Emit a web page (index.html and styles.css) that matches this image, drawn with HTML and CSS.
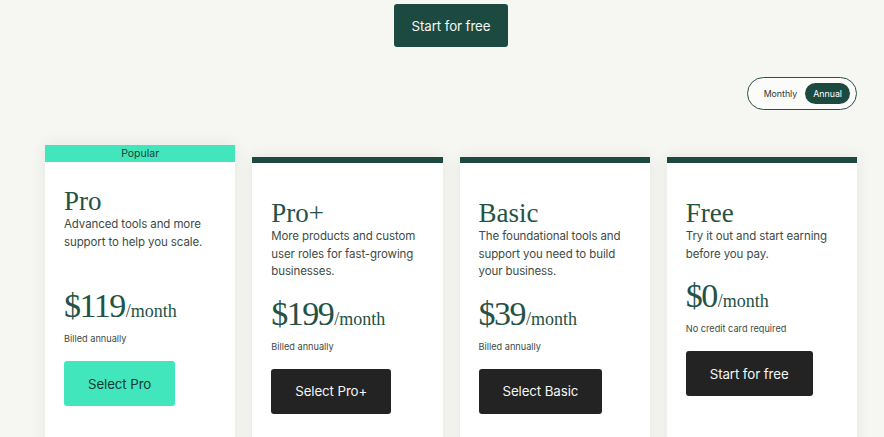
FILE: index.html
```html
<!DOCTYPE html>
<html lang="en">
<head>
<meta charset="utf-8">
<title>Pricing</title>
<link rel="stylesheet" href="styles.css">
</head>
<body>
<div class="page">
  <div class="hero">
    <a class="btn btn-green-dark" href="#">Start for free</a>
  </div>
  <div class="toggle-row">
    <div class="toggle">
      <span class="seg">Monthly</span>
      <span class="seg seg-active">Annual</span>
    </div>
  </div>
  <div class="cards">
    <div class="card card-popular">
      <div class="banner">Popular</div>
      <div class="card-body">
        <h2 class="title">Pro</h2>
        <p class="desc">Advanced tools and more support to help you scale.</p>
        <div class="price price-popular"><span class="amount">$119</span><span class="per">/month</span></div>
        <div class="note">Billed annually</div>
        <a class="btn btn-mint" href="#">Select Pro</a>
      </div>
    </div>
    <div class="card">
      <div class="bar"></div>
      <div class="card-body">
        <h2 class="title">Pro+</h2>
        <p class="desc">More products and custom user roles for fast-growing businesses.</p>
        <div class="price"><span class="amount">$199</span><span class="per">/month</span></div>
        <div class="note">Billed annually</div>
        <a class="btn btn-dark" href="#">Select Pro+</a>
      </div>
    </div>
    <div class="card">
      <div class="bar"></div>
      <div class="card-body">
        <h2 class="title">Basic</h2>
        <p class="desc">The foundational tools and support you need to build your business.</p>
        <div class="price"><span class="amount">$39</span><span class="per">/month</span></div>
        <div class="note">Billed annually</div>
        <a class="btn btn-dark" href="#">Select Basic</a>
      </div>
    </div>
    <div class="card">
      <div class="bar"></div>
      <div class="card-body">
        <h2 class="title">Free</h2>
        <p class="desc">Try it out and start earning before you pay.</p>
        <div class="price"><span class="amount">$0</span><span class="per">/month</span></div>
        <div class="note">No credit card required</div>
        <a class="btn btn-dark" href="#">Start for free</a>
      </div>
    </div>
  </div>
</div>
</body>
</html>
```

FILE: styles.css
```css
* { box-sizing: border-box; }
html, body {
  margin: 0;
  padding: 0;
  background: #f6f7f3;
  overflow: hidden;
}
body {
  font-family: Inter, "Noto Sans", "Liberation Sans", sans-serif;
  color: #3b4a45;
}
.page {
  width: 812px;
  margin-left: 45px;
}
.hero {
  display: flex;
  justify-content: center;
  padding-top: 4px;
}
.btn {
  display: inline-flex;
  align-items: center;
  justify-content: center;
  height: 45px;
  padding: 0 24px;
  border-radius: 3px;
  font-size: 13.3px;
  letter-spacing: -0.1px;
  text-decoration: none;
  white-space: nowrap;
}
.btn-green-dark {
  height: 43px;
  padding: 0 18px;
  background: #1d4a40;
  color: #f3f6f2;
}
.btn-mint {
  background: #41e6bc;
  color: #173a31;
}
.btn-dark {
  background: #222322;
  color: #f5f5f5;
}
.toggle-row {
  display: flex;
  justify-content: flex-end;
  margin-top: 30px;
}
.toggle {
  display: flex;
  align-items: center;
  height: 33px;
  padding: 0 6px 0 8px;
  border: 1px solid #2d4f47;
  border-radius: 17px;
  background: #fbfbf9;
}
.seg {
  display: inline-flex;
  align-items: center;
  height: 21px;
  padding: 0 8px;
  border-radius: 11px;
  font-size: 8.8px;
  color: #2a3430;
}
.seg-active {
  background: #1d4a40;
  color: #ffffff;
}
.cards {
  display: grid;
  grid-template-columns: repeat(4, 1fr);
  column-gap: 17px;
  align-items: start;
  margin-top: 35px;
}
.card {
  background: #ffffff;
  box-shadow: 0 0 14px rgba(40, 60, 50, 0.09);
  margin-top: 12px;
  min-height: 320px;
}
.card-popular {
  margin-top: 0;
}
.bar {
  height: 6px;
  background: #1d4a40;
}
.banner {
  height: 17px;
  background: #41e6bc;
  color: #1f3d35;
  font-size: 10.5px;
  display: flex;
  align-items: center;
  justify-content: center;
}
.card-body {
  padding: 36px 19px 40px;
}
.card-popular .card-body {
  padding-top: 25px;
}
.title {
  margin: 0;
  font-family: "Liberation Serif", "Times New Roman", serif;
  font-weight: normal;
  font-size: 27px;
  line-height: 29px;
  color: #245245;
}
.desc {
  margin: 0;
  font-size: 11.5px;
  letter-spacing: -0.1px;
  line-height: 17.5px;
  color: #3d4b46;
}
.price {
  margin-top: 13px;
  line-height: 40px;
  font-family: "Liberation Serif", "Times New Roman", serif;
  color: #245245;
  white-space: nowrap;
}
.price-popular {
  margin-top: 35px;
}
.amount {
  font-size: 34px;
  letter-spacing: -1.5px;
}
.per {
  font-size: 18px;
  margin-left: 1px;
}
.note {
  margin-top: 1px;
  font-size: 9.2px;
  line-height: 12px;
  color: #3f4a46;
}
.card-body .btn {
  margin-top: 16px;
}
```
